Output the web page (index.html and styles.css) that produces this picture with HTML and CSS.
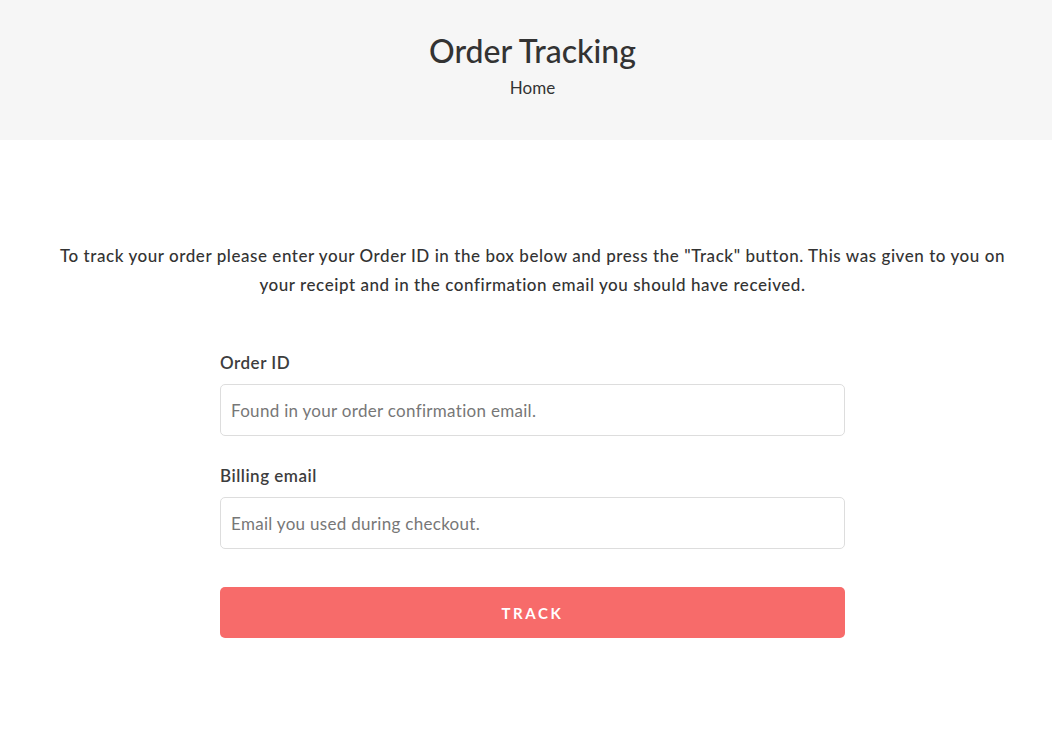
FILE: index.html
```html
<!DOCTYPE html>
<html lang="en">
    <head>
        <title>Order Tracking</title>
        <link rel="stylesheet" href="styles.css">
    </head>
    <body>
        <header class="page-hero">
            <h1>Order Tracking</h1>
            <nav class="crumbs"><a href="#">Home</a></nav>
        </header>
        <main class="content">
            <p class="intro">To track your order please enter your Order ID in the box below and press the "Track" button. This was given to you on your receipt and in the confirmation email you should have received.</p>
            <form class="track-form">
                <div class="field">
                    <label for="orderid">Order ID</label>
                    <input type="text" id="orderid" placeholder="Found in your order confirmation email.">
                </div>
                <div class="field">
                    <label for="order_email">Billing email</label>
                    <input type="text" id="order_email" placeholder="Email you used during checkout.">
                </div>
                <button type="submit" class="track-btn">Track</button>
            </form>
        </main>
    </body>
</html>
```

FILE: styles.css
```css
:root {
    --hero-bg: #f6f6f6;
    --text-color: #333333;
    --label-color: #3d3d3d;
    --input-border: #dddddd;
    --placeholder: #777777;
    --accent: #f76b6a;
}

body {
    margin: 0;
    background-color: white;
    color: var(--text-color);
    font-family: Lato, "Open Sans", sans-serif;
}

.page-hero {
    background-color: var(--hero-bg);
    height: 140px;
    box-sizing: border-box;
    padding: 30px 0 0 13px;
    text-align: center;
}

.page-hero h1 {
    margin: 0;
    font-size: 32px;
    font-weight: 500;
    line-height: 42px;
}

.crumbs {
    margin-top: 4px;
    font-size: 17px;
    line-height: 24px;
}

.crumbs a {
    color: var(--text-color);
    text-decoration: none;
}

.content {
    padding: 101px 20px 80px 33px;
}

.intro {
    margin: 0 auto;
    max-width: 960px;
    text-align: center;
    font-size: 17px;
    font-weight: 500;
    letter-spacing: 0.55px;
    line-height: 29px;
}

.track-form {
    width: 625px;
    margin: 52px auto 0;
}

.field {
    margin-bottom: 28px;
}

.field label {
    display: block;
    font-size: 17px;
    font-weight: 600;
    letter-spacing: 0.5px;
    color: var(--label-color);
    line-height: 24px;
    margin-bottom: 9px;
}

.field input {
    display: block;
    width: 100%;
    box-sizing: border-box;
    height: 52px;
    padding: 0 10px;
    border: 1px solid var(--input-border);
    border-radius: 5px;
    font-family: inherit;
    font-size: 17px;
    letter-spacing: 0.3px;
    color: var(--text-color);
    background: white;
}

.field input::placeholder {
    color: var(--placeholder);
}

.track-btn {
    display: block;
    width: 100%;
    height: 51px;
    margin-top: 38px;
    border: none;
    border-radius: 5px;
    background-color: var(--accent);
    color: white;
    font-family: inherit;
    font-size: 15px;
    font-weight: 700;
    letter-spacing: 2.6px;
    text-transform: uppercase;
}
```
